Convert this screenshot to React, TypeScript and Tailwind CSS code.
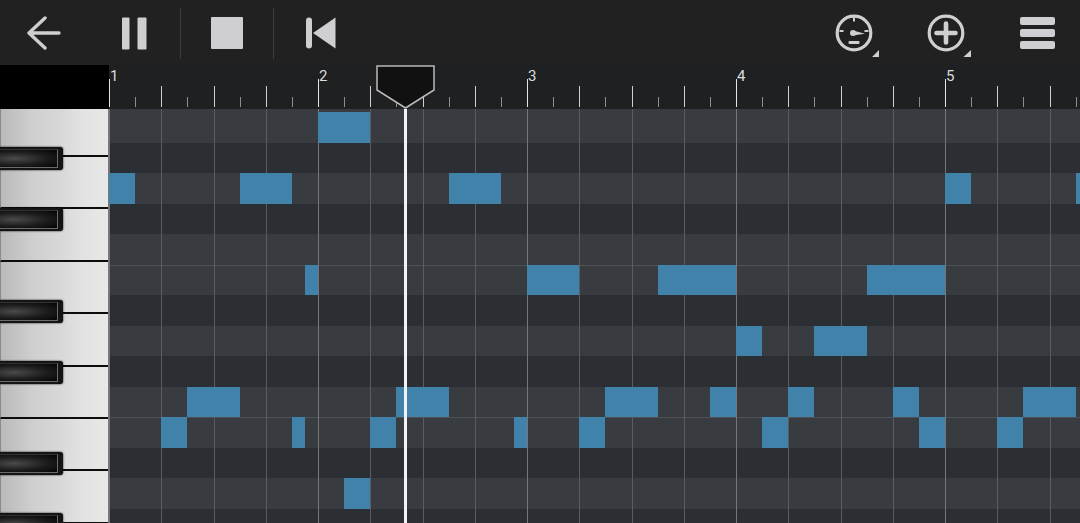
const U = 26.125;

const rows = [
  { h: 'h-[33.8px]', c: 'bg-[#383b40]' },
  { h: 'h-[30.5px]', c: 'bg-[#2b2e33]' },
  { h: 'h-[30.5px]', c: 'bg-[#383b40]' },
  { h: 'h-[30.5px]', c: 'bg-[#2b2e33]' },
  { h: 'h-[30.5px]', c: 'bg-[#383b40]' },
  { h: 'h-[30.5px]', c: 'bg-[#383b40] border-t border-[#4f5155]' },
  { h: 'h-[30.5px]', c: 'bg-[#2b2e33]' },
  { h: 'h-[30.5px]', c: 'bg-[#383b40]' },
  { h: 'h-[30.5px]', c: 'bg-[#2b2e33]' },
  { h: 'h-[30.5px]', c: 'bg-[#383b40]' },
  { h: 'h-[30.5px]', c: 'bg-[#383b40] border-t border-[#4f5155]' },
  { h: 'h-[30.5px]', c: 'bg-[#2b2e33]' },
  { h: 'h-[30.5px]', c: 'bg-[#383b40]' },
  { h: 'h-[30.5px]', c: 'bg-[#2b2e33]' },
];

// [row, start unit, length in units]
const notes: [number, number, number][] = [
  [0, 8, 2],
  [2, 0, 1], [2, 5, 2], [2, 13, 2], [2, 32, 1], [2, 37, 1],
  [5, 7.5, 0.5], [5, 16, 2], [5, 21, 3], [5, 29, 3],
  [7, 24, 1], [7, 27, 2],
  [9, 3, 2], [9, 11, 2], [9, 19, 2], [9, 23, 1], [9, 26, 1], [9, 30, 1], [9, 35, 2],
  [10, 2, 1], [10, 7, 0.5], [10, 10, 1], [10, 15.5, 0.5], [10, 18, 1], [10, 25, 1], [10, 31, 1], [10, 34, 1],
  [12, 9, 1],
];

const whiteKeys = [48, 52, 53, 52, 53, 52, 52, 53];
const blackTops = [38, 99, 191, 252, 343, 404];

function BackIcon() {
  return (
    <svg width="34" height="34" viewBox="0 0 34 34" className="ml-[27px] shrink-0">
      <path d="M2 17H32M18 2L2 17L18 32" fill="none" stroke="#cfcfd1" strokeWidth="3.4" strokeLinecap="round" strokeLinejoin="round" />
    </svg>
  );
}

function PauseIcon() {
  return (
    <svg width="25" height="33" viewBox="0 0 25 33" className="ml-[61px] shrink-0">
      <rect x="0" y="0.5" width="7.5" height="32" rx="1" fill="#cfcfd1" />
      <rect x="15.5" y="0.5" width="9" height="32" rx="1" fill="#cfcfd1" />
    </svg>
  );
}

function StopIcon() {
  return (
    <svg width="32" height="32" viewBox="0 0 32 32" className="ml-[30px] shrink-0">
      <rect width="32" height="32" rx="1" fill="#cfcfd1" />
    </svg>
  );
}

function SkipIcon() {
  return (
    <svg width="30" height="32" viewBox="0 0 30 32" className="ml-[32px] shrink-0">
      <rect x="0" y="0.5" width="6" height="31" rx="3" fill="#cfcfd1" />
      <path d="M29.5 0.5V31.5L7 16Z" fill="#cfcfd1" />
    </svg>
  );
}

function GaugeIcon() {
  return (
    <svg width="48" height="48" viewBox="0 0 48 48" className="ml-[499px] shrink-0">
      <circle cx="19" cy="24" r="16.8" fill="none" stroke="#cfcfd1" strokeWidth="3.2" />
      <path d="M19 8.5V12.5M4.5 22H8.5M29.5 22H33.5" stroke="#cfcfd1" strokeWidth="2" />
      <circle cx="18" cy="24" r="3" fill="#cfcfd1" />
      <path d="M18 21.5L30 24.8L18 26.5Z" fill="#cfcfd1" />
      <rect x="13.5" y="32" width="11" height="3" rx="1" fill="#cfcfd1" />
      <path d="M44 41V48H37Z" fill="#cfcfd1" />
    </svg>
  );
}

function AddIcon() {
  return (
    <svg width="48" height="48" viewBox="0 0 48 48" className="ml-[44px] shrink-0">
      <circle cx="19" cy="24" r="16.8" fill="none" stroke="#cfcfd1" strokeWidth="3.2" />
      <path d="M19 14.5V33.5M9.5 24H28.5" stroke="#cfcfd1" strokeWidth="4.6" strokeLinecap="round" />
      <path d="M44 41V48H36.5Z" fill="#cfcfd1" />
    </svg>
  );
}

function MenuIcon() {
  return (
    <div className="ml-[45px] flex w-[35px] shrink-0 flex-col gap-[4px]">
      <div className="h-[8px] rounded-[2px] bg-[#cfcfd3]" />
      <div className="h-[8px] rounded-[2px] bg-[#cfcfd3]" />
      <div className="h-[8px] rounded-[2px] bg-[#cfcfd3]" />
    </div>
  );
}

function Divider() {
  return <div className="h-[51px] w-px shrink-0 bg-[#3c3c3e]" />;
}

function Ruler() {
  const cells = Array.from({ length: 38 }, (_, i) => i);
  return (
    <div className="relative flex flex-1 overflow-hidden bg-[#1f2022]">
      {cells.map((i) => {
        const h = i % 8 === 0 ? 'h-[28px] bg-[#e4e4e4]' : i % 2 === 0 ? 'h-[21px] bg-[#cfcfcf]' : 'h-[10px] bg-[#8f8f8f]';
        return (
          <div key={i} className="flex h-full w-[26.125px] shrink-0 items-end pb-[2px]">
            <div className={`w-px ${h}`} />
          </div>
        );
      })}
      {[1, 2, 3, 4, 5].map((n) => (
        <span
          key={n}
          className="absolute top-[3px] text-[15px] leading-[16px] text-[#dcdcdc] [font-family:Roboto,sans-serif]"
          style={{ left: (n - 1) * 209 + 1 }}
        >
          {n}
        </span>
      ))}
      <svg width="60" height="44" viewBox="0 0 60 44" className="absolute left-[267px] top-0">
        <path d="M1 1H58V25L29.5 43L1 25Z" fill="#111112" stroke="#b9b9b9" strokeWidth="1.5" />
      </svg>
    </div>
  );
}

function Piano() {
  return (
    <div className="relative flex w-[109px] shrink-0 flex-col overflow-hidden border-r border-[#77797d] bg-black">
      {whiteKeys.map((h, i) => (
        <div
          key={i}
          className="shrink-0 border-b-2 border-l border-b-[#0c0c0c] border-l-[#8a8a8a] bg-[linear-gradient(to_right,#bababa_0%,#cfcfcf_30%,#d9d9d9_58%,#e2e2e2_75%,#e8e8e8_100%)]"
          style={{ height: h }}
        />
      ))}
      {blackTops.map((t) => (
        <div
          key={t}
          className="absolute left-0 flex h-[23px] w-[63px] rounded-r-[3px] bg-[#141414] py-[2px] pr-[5px] shadow-[0_0_2px_#000]"
          style={{ top: t }}
        >
          <div className="h-full w-full border-t border-r border-b border-t-[#333] border-r-[#6b6b6b] border-b-[#6b6b6b] bg-[radial-gradient(ellipse_at_25%_50%,#4a4a4a_0%,#1c1c1c_55%,#050505_100%)]" />
        </div>
      ))}
    </div>
  );
}

function Roll() {
  const lines = Array.from({ length: 19 }, (_, i) => i);
  return (
    <div className="relative flex-1 overflow-hidden">
      <div className="flex flex-col">
        {rows.map((r, i) => (
          <div key={i} className={`shrink-0 ${r.h} ${r.c}`} />
        ))}
      </div>
      <div className="absolute inset-0 flex">
        {lines.map((i) => (
          <div
            key={i}
            className={`h-full w-[52.25px] shrink-0 border-l ${i % 4 === 0 ? 'border-[#74767a]' : 'border-[#5a5c60]'}`}
          />
        ))}
      </div>
      {notes.map(([row, start, len], i) => (
        <div
          key={i}
          className="absolute h-[30.5px] bg-[#4182ab]"
          style={{ top: row === 0 ? 3.3 : 33.8 + (row - 1) * 30.5, left: start * U, width: len * U }}
        />
      ))}
      <div className="absolute bottom-0 left-[295px] top-0 w-[3px] bg-[#f2f2f2]" />
    </div>
  );
}

export default function App() {
  return (
    <div className="flex h-[523px] w-[1080px] flex-col overflow-hidden bg-[#212121]">
      <header className="flex h-[65px] shrink-0 items-center pt-px">
        <BackIcon />
        <PauseIcon />
        <div className="ml-[33px]">
          <Divider />
        </div>
        <StopIcon />
        <div className="ml-[30px]">
          <Divider />
        </div>
        <SkipIcon />
        <GaugeIcon />
        <AddIcon />
        <MenuIcon />
      </header>
      <div className="flex h-[44px] shrink-0">
        <div className="w-[109px] shrink-0 bg-black" />
        <Ruler />
      </div>
      <div className="flex min-h-0 flex-1">
        <Piano />
        <Roll />
      </div>
    </div>
  );
}
